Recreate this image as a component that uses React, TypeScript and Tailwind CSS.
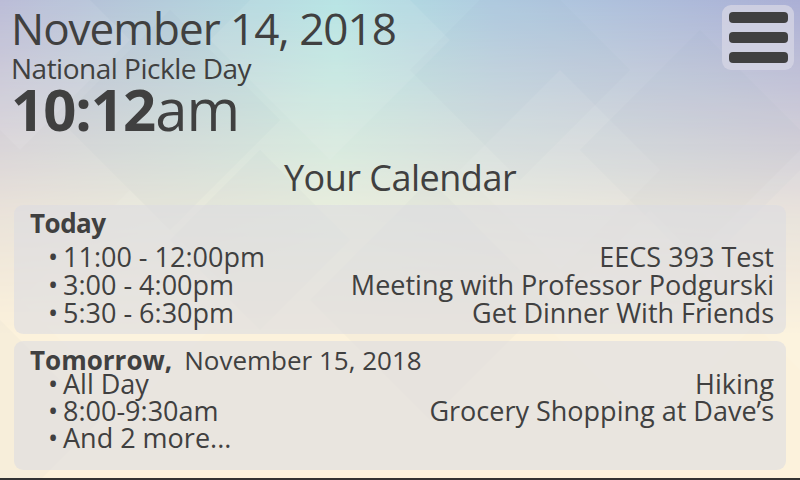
import React from "react";

const today = [
  { time: "11:00 - 12:00pm", title: "EECS 393 Test" },
  { time: "3:00 - 4:00pm", title: "Meeting with Professor Podgurski" },
  { time: "5:30 - 6:30pm", title: "Get Dinner With Friends" },
];

const tomorrow = [
  { time: "All Day", title: "Hiking" },
  { time: "8:00-9:30am", title: "Grocery Shopping at Dave’s" },
  { time: "And 2 more...", title: "" },
];

// diamonds for the faded backdrop: [cx, cy, half-diagonal, light?]
const diamonds: [number, number, number, boolean][] = [
  [20, 40, 110, true],
  [170, 120, 110, false],
  [330, 40, 120, true],
  [520, 70, 110, false],
  [560, 170, 100, true],
  [700, 150, 120, false],
  [800, 260, 110, true],
  [130, 300, 110, true],
  [430, 300, 120, false],
  [650, 320, 110, true],
  [260, 240, 90, false],
  [0, 420, 100, false],
];

function Backdrop() {
  return (
    <svg className="absolute inset-0" width="800" height="480" viewBox="0 0 800 480">
      <defs>
        <linearGradient id="top" x1="0" y1="0" x2="1" y2="0">
          <stop offset="0" stopColor="#b6b7d4" />
          <stop offset="0.42" stopColor="#b2e2e2" />
          <stop offset="0.62" stopColor="#b0cbe0" />
          <stop offset="1" stopColor="#abafd5" />
        </linearGradient>
        <linearGradient id="fade" x1="0" y1="0" x2="0" y2="1">
          <stop offset="0" stopColor="#fff" stopOpacity="1" />
          <stop offset="0.45" stopColor="#fff" stopOpacity="0.25" />
          <stop offset="0.7" stopColor="#fff" stopOpacity="0" />
        </linearGradient>
        <mask id="m">
          <rect width="800" height="480" fill="url(#fade)" />
        </mask>
      </defs>
      <rect width="800" height="480" fill="#fcf2dc" />
      <rect width="800" height="480" fill="url(#top)" mask="url(#m)" />
      {diamonds.map(([cx, cy, r, light], i) => (
        <polygon
          key={i}
          points={`${cx},${cy - r} ${cx + r},${cy} ${cx},${cy + r} ${cx - r},${cy}`}
          fill={light ? "#ffffff" : "#8a8fb0"}
          fillOpacity={light ? 0.08 : 0.04}
        />
      ))}
    </svg>
  );
}

function Row({ time, title }: { time: string; title: string }) {
  return (
    <div className="flex justify-between">
      <div className="flex">
        <span className="w-[16px] pl-[1px]">•</span>
        <span>{time}</span>
      </div>
      <span>{title}</span>
    </div>
  );
}

export default function App() {
  return (
    <div className="relative w-[800px] h-[480px] overflow-hidden border-b-2 border-[#333333] font-['Open_Sans',sans-serif] text-[#404040]">
      <Backdrop />

      <div className="relative flex flex-col">
        {/* Header */}
        <div className="flex justify-between">
          <div className="pl-[11px] pt-1 flex flex-col">
            <div className="text-[44px] leading-[48px] tracking-[-1px]">November 14, 2018</div>
            <div className="mt-px text-[28px] leading-[30px] tracking-[-0.5px]">National Pickle Day</div>
            <div className="text-[58px] leading-[52px] tracking-[-1px]">
              <span className="font-bold">10:12</span>am
            </div>
          </div>
          <button className="mt-[5px] mr-[6px] w-[72px] h-[65px] rounded-[9px] bg-[#d4d5e3]/80 flex flex-col items-center gap-[9px] pt-[7px]">
            <span className="w-[59px] h-[11px] rounded-[4px] bg-[#404040]" />
            <span className="w-[59px] h-[11px] rounded-[4px] bg-[#404040]" />
            <span className="w-[59px] h-[11px] rounded-[4px] bg-[#404040]" />
          </button>
        </div>

        <div className="mt-[21px] text-center text-[36px] leading-[44px] tracking-[-0.5px]">Your Calendar</div>

        {/* Today */}
        <div className="mx-[14px] mt-[5px] h-[129px] rounded-[9px] bg-[rgba(220,220,225,0.6)] pt-[3px] pl-[16px] pr-[12px]">
          <div className="font-bold text-[26px] leading-[30px] tracking-[-0.5px]">Today</div>
          <div className="mt-[5px] pl-[17px] text-[27px] leading-[28px]">
            {today.map((e) => (
              <Row key={e.time} {...e} />
            ))}
          </div>
        </div>

        {/* Tomorrow */}
        <div className="mx-[14px] mt-[7px] h-[129px] rounded-[9px] bg-[rgba(220,220,225,0.6)] pt-[4px] pl-[16px] pr-[12px]">
          <div className="text-[26px] leading-[30px]">
            <span className="font-bold">Tomorrow,</span>
            <span className="ml-[12px]">November 15, 2018</span>
          </div>
          <div className="mt-[-5px] pl-[17px] text-[27px] leading-[27px]">
            {tomorrow.map((e) => (
              <Row key={e.time} {...e} />
            ))}
          </div>
        </div>
      </div>
    </div>
  );
}
